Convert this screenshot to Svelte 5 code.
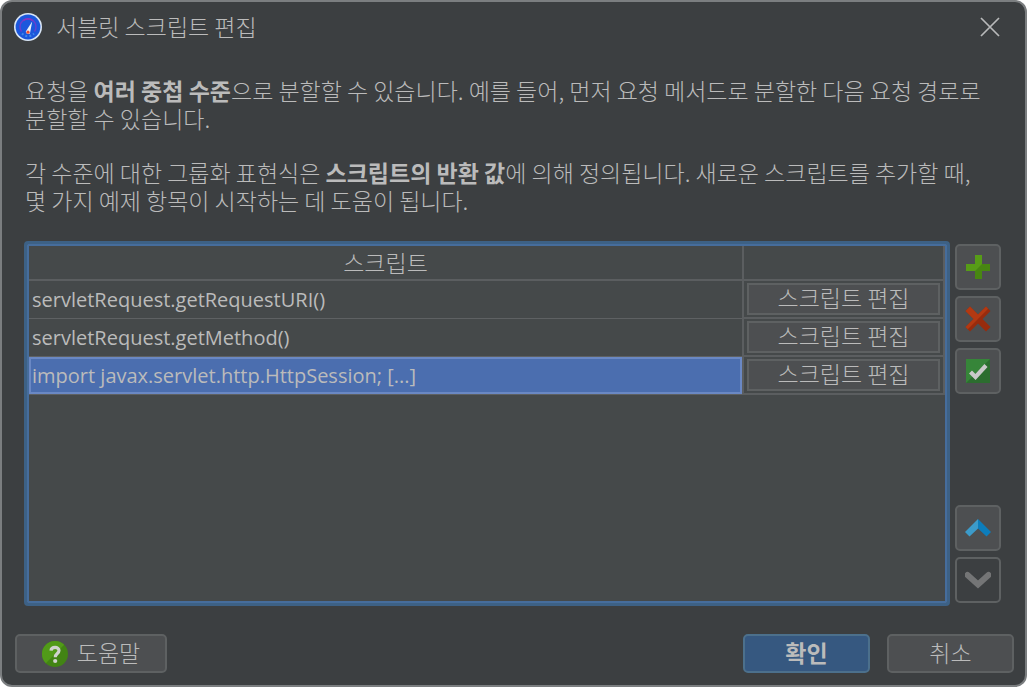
<script>
  let scripts = $state([
    { text: 'servletRequest.getRequestURI()' },
    { text: 'servletRequest.getMethod()' },
    { text: 'import javax.servlet.http.HttpSession; [...]' }
  ]);
  let selected = $state(2);

  function move(offset) {
    const target = selected + offset;
    if (target < 0 || target >= scripts.length) return;
    const item = scripts[selected];
    scripts[selected] = scripts[target];
    scripts[target] = item;
    selected = target;
  }

  function add() {
    scripts.push({ text: 'servletRequest.getMethod()' });
    selected = scripts.length - 1;
  }

  function remove() {
    scripts.splice(selected, 1);
    selected = Math.max(0, Math.min(selected, scripts.length - 1));
  }
</script>

<main class="dialog">
  <header>
    <svg class="logo" viewBox="0 0 28 28" aria-hidden="true">
      <circle cx="14" cy="14" r="14" fill="#d9e6f6" />
      <circle cx="14" cy="14" r="12.4" fill="#1b57dc" />
      <path d="M7.5 18.5A8 8 0 1 1 20.5 18.5" fill="none" stroke="#6540cf" stroke-width="1.5" />
      <path d="M9.5 7.4A8 8 0 0 1 18.5 7.4" fill="none" stroke="#8b35bd" stroke-width="1.5" />
      <path d="M8 20.5a8 8 0 0 0 12 0" fill="none" stroke="#3f86ea" stroke-width="2" stroke-dasharray="2 2" />
      <path d="M18.2 8.6L16 20.2A2.4 2.4 0 0 1 11.8 18.4Z" fill="#e8eef8" />
      <circle cx="14" cy="19.2" r="1.6" fill="#ee4a32" />
    </svg>
    <h1>서블릿 스크립트 편집</h1>
    <button class="close" aria-label="닫기">
      <svg viewBox="0 0 20 20" aria-hidden="true">
        <path d="M1 1L19 19M19 1L1 19" fill="none" stroke="#b8b9ba" stroke-width="1.7" />
      </svg>
    </button>
  </header>

  <section class="intro">
    <p>
      요청을 <b>여러 중첩 수준</b>으로 분할할 수 있습니다. 예를 들어, 먼저 요청 메서드로 분할한 다음 요청 경로로<br />
      분할할 수 있습니다.
    </p>
    <p>
      각 수준에 대한 그룹화 표현식은 <b>스크립트의 반환 값</b>에 의해 정의됩니다. 새로운 스크립트를 추가할 때,<br />
      몇 가지 예제 항목이 시작하는 데 도움이 됩니다.
    </p>
  </section>

  <section class="editor">
    <div class="list">
      <table>
        <thead>
          <tr>
            <th>스크립트</th>
            <th class="action"></th>
          </tr>
        </thead>
        <tbody>
          {#each scripts as script, i}
            <tr class:selected={i === selected} onclick={() => (selected = i)}>
              <td class="text">{script.text}</td>
              <td class="action"><button class="edit">스크립트 편집</button></td>
            </tr>
          {/each}
        </tbody>
      </table>
    </div>

    <div class="tools">
      <button class="tool" aria-label="추가" onclick={add}>
        <svg viewBox="0 0 26 26" aria-hidden="true">
          <path d="M10 1h7v9h8v7h-8v8h-7v-8H1v-7h9z" fill="#488612" />
          <path d="M10 1h7v9L10 17H1v-7h9z" fill="#579c17" />
        </svg>
      </button>
      <button class="tool" aria-label="삭제" onclick={remove}>
        <svg viewBox="0 0 26 26" aria-hidden="true">
          <path d="M5 0.5L13 8.5L21 0.5L25.5 5L17.5 13L25.5 21L21 25.5L13 17.5L5 25.5L0.5 21L8.5 13L0.5 5Z" fill="#982b0d" />
          <path d="M5 0.5L13 8.5L21 0.5L23.2 2.8L2.8 23.2L0.5 21L8.5 13L0.5 5Z" fill="#b33912" />
        </svg>
      </button>
      <button class="tool" aria-label="확인">
        <svg viewBox="0 0 26 26" aria-hidden="true">
          <path d="M1 1h24v24H1z" fill="#2c6d2f" />
          <path d="M1 1h24L1 25z" fill="#368539" />
          <path d="M5.5 14L10.5 19L21 7.5" fill="none" stroke="#c9c9c9" stroke-width="4.2" />
        </svg>
      </button>
      <button class="tool up" aria-label="위로" onclick={() => move(-1)}>
        <svg viewBox="0 0 26 26" aria-hidden="true">
          <path d="M13 4L26 17L21.5 21.5L13 13.5Z" fill="#0c7dbb" />
          <path d="M13 4L0 17L4.5 21.5L13 13.5Z" fill="#3c9bca" />
        </svg>
      </button>
      <button class="tool" aria-label="아래로" disabled={selected >= scripts.length - 1} onclick={() => move(1)}>
        <svg viewBox="0 0 26 26" aria-hidden="true">
          <path d="M2.5 8L13 17.5L23.5 8" fill="none" stroke="#747576" stroke-width="6" stroke-linecap="round" />
        </svg>
      </button>
    </div>
  </section>

  <footer>
    <button class="help">
      <svg viewBox="0 0 26 26" aria-hidden="true">
        <circle cx="13" cy="13" r="13" fill="#428414" />
        <path d="M3.8 22.2A13 13 0 0 1 22.2 3.8Z" fill="#519a18" />
        <path d="M9 9.6C9.4 5.4 17 5.4 17 9.6C17 12.6 13.3 12.4 13.3 16.2" fill="none" stroke="#d0d2ce" stroke-width="3.2" />
        <circle cx="13.2" cy="20" r="2.1" fill="#d0d2ce" />
      </svg>
      <span>도움말</span>
    </button>
    <button class="ok"><span>확인</span></button>
    <button class="cancel"><span>취소</span></button>
  </footer>
</main>

<style>
  :global(body) {
    background: #fff;
  }

  .dialog {
    box-sizing: border-box;
    min-height: 100vh;
    display: flex;
    flex-direction: column;
    border: 2px solid #7b7e80;
    border-radius: 12px;
    background: #3c3f41;
    color: #bbb;
    font-family: "Noto Sans CJK KR", sans-serif;
    font-size: 23px;
    font-weight: 300;
    line-height: 28px;
  }

  button {
    box-sizing: border-box;
    padding: 0;
    border: 2px solid #5e6162;
    border-radius: 5px;
    background: #4d4f51;
    color: inherit;
    font: inherit;
  }

  header {
    display: flex;
    align-items: center;
    gap: 14px;
    padding: 11px 25px 11px 12px;
  }

  h1 {
    flex: 1;
    margin: 0;
    padding-bottom: 2px;
    font-size: inherit;
    font-weight: inherit;
    line-height: 26px;
  }

  .logo {
    width: 28px;
    height: 28px;
  }

  .close {
    display: flex;
    border: 0;
    background: none;
  }

  .close svg {
    width: 20px;
    height: 20px;
  }

  .intro {
    padding: 24px 23px 1px;
  }

  p {
    margin: 0 0 26px;
  }

  b {
    font-weight: 700;
  }

  .editor {
    flex: 1;
    display: flex;
    gap: 5px;
    padding: 0 24px 0 22px;
  }

  .list {
    flex: 1;
    border: 3px solid #3d6185;
    border-radius: 4px;
    box-shadow: inset 0 0 0 2px #466d9c;
    padding: 2px;
    background: #45494a;
  }

  table {
    width: 100%;
    table-layout: fixed;
    border-spacing: 0;
  }

  th {
    height: 31px;
    padding: 0 0 2px;
    border-bottom: 2px solid #5b5e60;
    font-weight: inherit;
  }

  td {
    height: 37px;
    padding: 0;
    border-bottom: 1px solid #5e6163;
  }

  .action {
    box-sizing: border-box;
    width: 203px;
    border-left: 2px solid #5b5e60;
    border-right: 2px solid #5b5e60;
  }

  td.action {
    padding: 0 3px;
    border-bottom: 2px solid #5b5e60;
  }

  .text {
    padding-left: 3px;
    font-family: "Open Sans", "Noto Sans CJK KR", sans-serif;
    font-size: 20px;
    font-weight: 400;
  }

  .selected .text {
    background: #4b6eaf;
    box-shadow: inset 0 0 0 2px #6a88c4;
  }

  .edit {
    display: block;
    width: 100%;
    height: 32px;
    padding-bottom: 4px;
    border-radius: 0;
    line-height: 24px;
  }

  .tools {
    display: flex;
    flex-direction: column;
    gap: 6px;
    padding: 3px 0;
  }

  .tool {
    display: flex;
    align-items: center;
    justify-content: center;
    width: 46px;
    height: 46px;
  }

  .tool svg {
    width: 26px;
    height: 26px;
  }

  .tool:disabled {
    background: none;
  }

  .up {
    margin-top: auto;
  }

  footer {
    display: flex;
    gap: 17px;
    padding: 28px 11px 12px 13px;
  }

  footer button {
    width: 127px;
    height: 39px;
  }

  footer span {
    display: block;
    padding-bottom: 4px;
  }

  .help {
    display: flex;
    align-items: center;
    justify-content: center;
    gap: 9px;
    width: 152px;
    margin-right: auto;
  }

  .help svg {
    width: 26px;
    height: 26px;
  }

  .ok {
    border-color: #4c708c;
    background: #365880;
    font-weight: 700;
  }
</style>
